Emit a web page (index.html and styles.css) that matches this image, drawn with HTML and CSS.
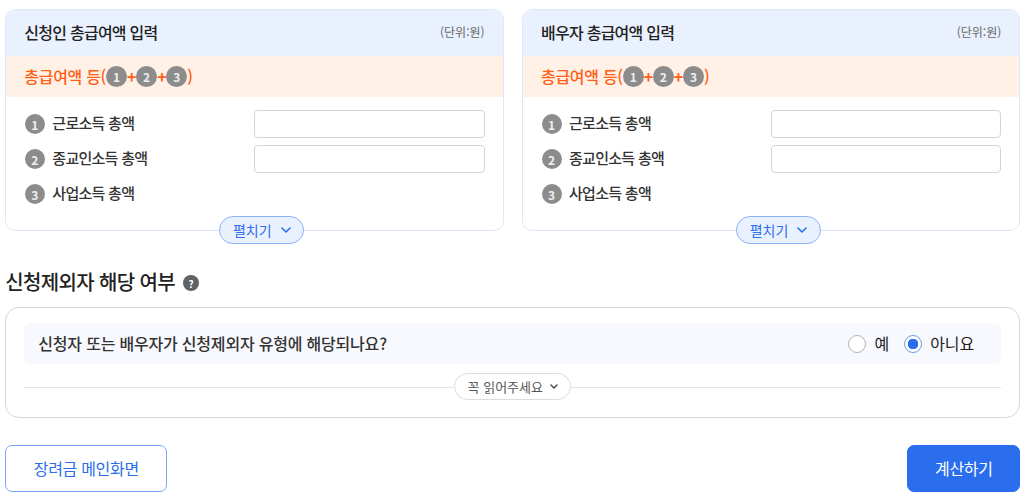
FILE: index.html
```html
<!DOCTYPE html>
<html lang="ko">
<head>
    <meta charset="UTF-8">
    <meta name="viewport" content="width=device-width, initial-scale=1.0">
    <title>장려금 계산하기</title>
    <link rel="stylesheet" href="styles.css">
</head>
<body>
    <div class="page">
        <div class="cards">
            <section class="card">
                <div class="card-head">
                    <h2 class="card-title">신청인 총급여액 입력</h2>
                    <span class="unit">(단위:원)</span>
                </div>
                <div class="total">총급여액 등(<span class="num">1</span><b class="plus">+</b><span class="num">2</span><b class="plus">+</b><span class="num">3</span>)</div>
                <div class="card-body">
                    <div class="row">
                        <span class="num">1</span><span class="row-label">근로소득 총액</span>
                        <input class="amount" type="text">
                    </div>
                    <div class="row">
                        <span class="num">2</span><span class="row-label">종교인소득 총액</span>
                        <input class="amount" type="text">
                    </div>
                    <div class="row">
                        <span class="num">3</span><span class="row-label">사업소득 총액</span>
                    </div>
                </div>
                <button class="expand-btn" type="button">펼치기
                    <svg width="10" height="6" viewBox="0 0 10 6"><path d="M1 1l4 4 4-4" fill="none" stroke="#2a6ded" stroke-width="1.6" stroke-linecap="round" stroke-linejoin="round"/></svg>
                </button>
            </section>
            <section class="card">
                <div class="card-head">
                    <h2 class="card-title">배우자 총급여액 입력</h2>
                    <span class="unit">(단위:원)</span>
                </div>
                <div class="total">총급여액 등(<span class="num">1</span><b class="plus">+</b><span class="num">2</span><b class="plus">+</b><span class="num">3</span>)</div>
                <div class="card-body">
                    <div class="row">
                        <span class="num">1</span><span class="row-label">근로소득 총액</span>
                        <input class="amount" type="text">
                    </div>
                    <div class="row">
                        <span class="num">2</span><span class="row-label">종교인소득 총액</span>
                        <input class="amount" type="text">
                    </div>
                    <div class="row">
                        <span class="num">3</span><span class="row-label">사업소득 총액</span>
                    </div>
                </div>
                <button class="expand-btn" type="button">펼치기
                    <svg width="10" height="6" viewBox="0 0 10 6"><path d="M1 1l4 4 4-4" fill="none" stroke="#2a6ded" stroke-width="1.6" stroke-linecap="round" stroke-linejoin="round"/></svg>
                </button>
            </section>
        </div>

        <h3 class="section-title">신청제외자 해당 여부 <span class="help">?</span></h3>
        <section class="box">
            <div class="question">
                <span class="question-text">신청자 또는 배우자가 신청제외자 유형에 해당되나요?</span>
                <div class="radios">
                    <label class="radio"><span class="dot"></span>예</label>
                    <label class="radio"><span class="dot checked"></span>아니요</label>
                </div>
            </div>
            <div class="divider">
                <button class="notice-btn" type="button">꼭 읽어주세요
                    <svg width="8" height="5" viewBox="0 0 8 5"><path d="M1 1l3 3 3-3" fill="none" stroke="#444" stroke-width="1.4" stroke-linecap="round" stroke-linejoin="round"/></svg>
                </button>
            </div>
        </section>

        <div class="actions">
            <button class="btn btn-line" type="button">장려금 메인화면</button>
            <button class="btn btn-fill" type="button">계산하기</button>
        </div>
    </div>
</body>
</html>
```

FILE: styles.css
```css
* {
    margin: 0;
    padding: 0;
    box-sizing: border-box;
}

body {
    font-family: "Noto Sans CJK KR", "Noto Sans", sans-serif;
    background: #fff;
    color: #222;
}

.page {
    padding: 9px 3.7px 0 5.3px;
}

.cards {
    display: grid;
    grid-template-columns: 498.3px 498.3px;
    justify-content: space-between;
}

.card {
    position: relative;
    height: 222px;
    border: 1px solid #dfe7f7;
    border-radius: 10px;
}

.card-head {
    display: flex;
    justify-content: space-between;
    align-items: center;
    height: 46px;
    padding: 0 18px 3px;
    background: #eaf1fe;
    border-radius: 9px 9px 0 0;
}

.card-title {
    font-size: 16px;
    font-weight: 500;
    letter-spacing: -0.75px;
    color: #222;
}

.unit {
    font-size: 12px;
    color: #666;
}

.total {
    display: flex;
    align-items: center;
    height: 41px;
    padding: 0 18px 2px;
    background: #fff1e6;
    color: #ff5e14;
    font-size: 16px;
    font-weight: 500;
    letter-spacing: -0.3px;
}

.plus {
    font-weight: 700;
}

.num {
    display: inline-flex;
    justify-content: center;
    align-items: center;
    width: 20px;
    height: 20px;
    border-radius: 50%;
    background: #8c8c8c;
    color: #eee;
    font-size: 12px;
    font-weight: 700;
    letter-spacing: 0;
}

.total .num {
    width: 21px;
    height: 21px;
    margin: 2px 0 0;
}

.card-body {
    display: flex;
    flex-direction: column;
    gap: 7px;
    padding: 13px 18px 0 18.5px;
}

.row {
    display: flex;
    align-items: center;
    height: 28px;
}

.row-label {
    margin: 0 0 3px 7.5px;
    font-size: 15px;
    font-weight: 500;
    letter-spacing: -0.72px;
    color: #333;
}

.amount {
    width: 230.5px;
    height: 28px;
    margin-left: auto;
    border: 1px solid #d4d4d4;
    border-radius: 4px;
    background: #fff;
}

.expand-btn {
    position: absolute;
    left: 212.7px;
    bottom: -14px;
    display: flex;
    justify-content: center;
    align-items: center;
    gap: 9px;
    width: 85.5px;
    height: 28px;
    padding-bottom: 1px;
    border: 1px solid #8db2f5;
    border-radius: 14px;
    background: #eaf1fe;
    color: #2a6ded;
    font-family: inherit;
    font-size: 14px;
}

.section-title {
    display: flex;
    align-items: center;
    gap: 8px;
    margin-top: 38px;
    height: 27px;
    padding-bottom: 2px;
    font-size: 20px;
    font-weight: 500;
    letter-spacing: -0.65px;
    color: #222;
}

.help {
    display: inline-flex;
    justify-content: center;
    align-items: center;
    width: 16px;
    height: 16px;
    margin-top: 3px;
    border-radius: 50%;
    background: #5f6368;
    color: #fff;
    font-size: 10px;
    font-weight: 700;
    letter-spacing: 0;
}

.box {
    height: 111px;
    margin-top: 11px;
    padding: 15px 18px 0;
    border: 1px solid #d6d6d6;
    border-radius: 14px;
}

.question {
    display: flex;
    justify-content: space-between;
    align-items: center;
    height: 41px;
    padding: 0 27px 2px 14px;
    background: #f7f9fe;
    border-radius: 6px;
}

.question-text {
    font-size: 16px;
    color: #333;
    font-weight: 500;
    letter-spacing: -0.2px;
}

.radios {
    display: flex;
    gap: 15px;
}

.radio {
    display: flex;
    align-items: center;
    gap: 8px;
    font-size: 16px;
    color: #222;
}

.dot {
    width: 18px;
    height: 18px;
    margin-top: 2px;
    border: 1px solid #b5b5b5;
    border-radius: 50%;
    background: #fff;
}

.dot.checked {
    border-color: #6b9cf5;
    background: radial-gradient(circle, #2a6ded 0 5px, #fff 5.5px);
}

.divider {
    display: flex;
    justify-content: center;
    align-items: center;
    height: 27px;
    margin-top: 9px;
    background: linear-gradient(#e4e4e4, #e4e4e4) 0 14px / 100% 1px no-repeat;
}

.notice-btn {
    display: flex;
    justify-content: center;
    align-items: center;
    gap: 7px;
    width: 117px;
    height: 27px;
    border: 1px solid #dcdcdc;
    border-radius: 14px;
    background: #fff;
    color: #555;
    font-family: inherit;
    font-size: 13px;
}

.actions {
    display: flex;
    justify-content: space-between;
    margin-top: 27px;
}

.btn {
    height: 47px;
    padding-bottom: 2px;
    border-radius: 7px;
    font-family: inherit;
    font-size: 16px;
    letter-spacing: -0.3px;
}

.btn-line {
    width: 162px;
    border: 1px solid #7aa6f5;
    background: #fff;
    color: #2a6ded;
}

.btn-fill {
    width: 113px;
    border: 1px solid #2a6ded;
    background: #2a6ded;
    color: #fff;
}
```
